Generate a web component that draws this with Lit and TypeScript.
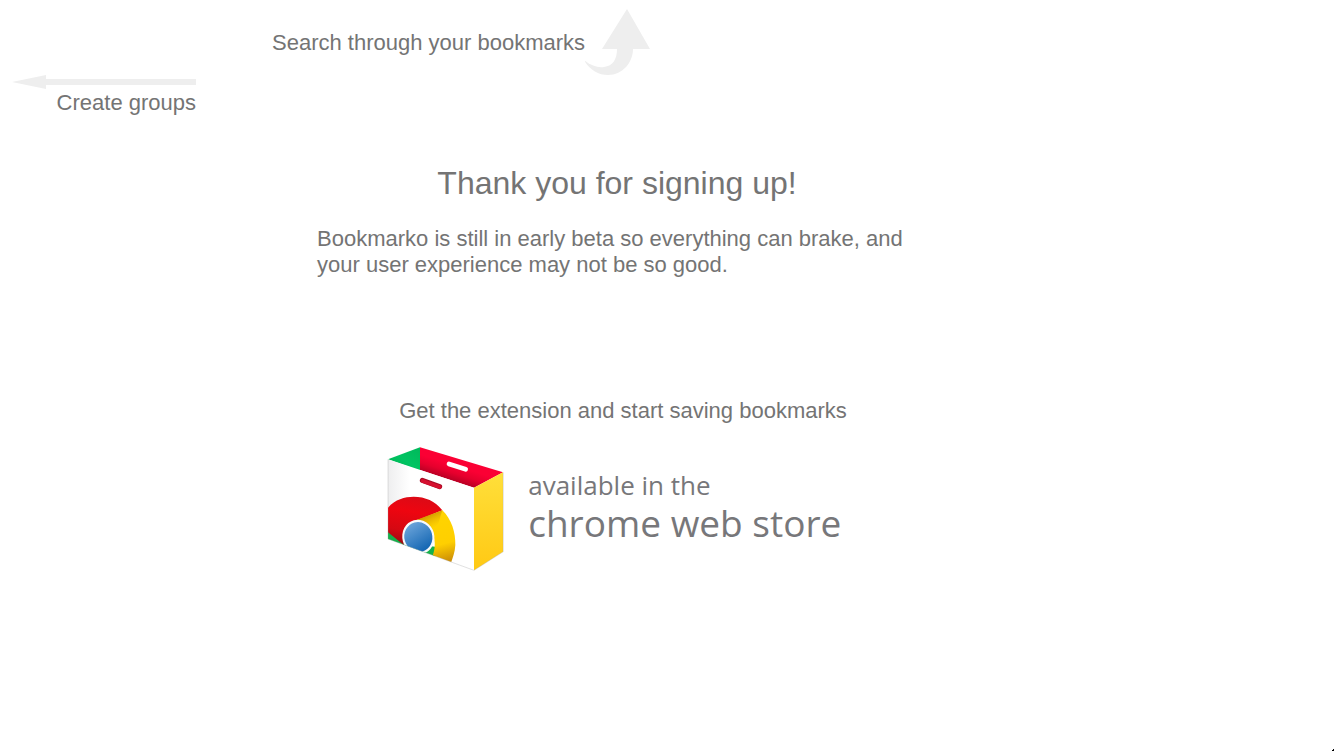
import { LitElement, html, css } from "lit";
import { customElement } from "lit/decorators.js";

@customElement("chrome-bag")
class ChromeBag extends LitElement {
  static styles = css`
    :host { display: block; flex: none; }
    .bag { display: block; width: 117px; height: 126px; }
  `;

  render() {
    return html`
      <svg class="bag" viewBox="24 18 351 378" aria-hidden="true">
        <defs>
          <clipPath id="front"><path d="M27 58 285 143V391L27 297Z" /></clipPath>
          <linearGradient id="green" x1="0" x2="1" y1="1" y2="0">
            <stop offset="0" stop-color="#00b050" /><stop offset=".5" stop-color="#00c462" /><stop offset="1" stop-color="#00b85a" />
          </linearGradient>
          <linearGradient id="inside" gradientUnits="userSpaceOnUse" x1="218" x2="204" y1="73" y2="117">
            <stop offset="0" stop-color="#fb0034" /><stop offset=".5" stop-color="#e6002d" /><stop offset="1" stop-color="#b80024" />
          </linearGradient>
          <linearGradient id="side" x1="0" x2="0" y1="0" y2="1">
            <stop offset="0" stop-color="#ffdf3a" /><stop offset="1" stop-color="#ffc914" />
          </linearGradient>
          <linearGradient id="paper" x1="0" x2="1">
            <stop offset="0" stop-color="#eeeeef" /><stop offset=".25" stop-color="#fff" />
          </linearGradient>
          <linearGradient id="red" x1=".5" x2=".3" y1="0" y2="1">
            <stop offset="0" stop-color="#dc0a16" /><stop offset=".3" stop-color="#ee0510" /><stop offset=".7" stop-color="#d50812" /><stop offset="1" stop-color="#960c10" />
          </linearGradient>
          <linearGradient id="yellow" gradientUnits="userSpaceOnUse" x1="175" x2="215" y1="220" y2="365">
            <stop offset="0" stop-color="#ffd400" /><stop offset=".62" stop-color="#ffcf00" /><stop offset="1" stop-color="#c98a08" />
          </linearGradient>
          <linearGradient id="fold" gradientUnits="userSpaceOnUse" x1="148" x2="165" y1="225" y2="262">
            <stop offset="0" stop-color="#b87c00" stop-opacity=".65" /><stop offset="1" stop-color="#e0a500" stop-opacity="0" />
          </linearGradient>
          <linearGradient id="blue" x1=".3" x2=".6" y1="0" y2="1">
            <stop offset="0" stop-color="#6ba4da" /><stop offset="1" stop-color="#1265b2" />
          </linearGradient>
        </defs>
        <path d="M27 58 123 22V92Z" fill="url(#green)" />
        <path d="M123 22 372 97 285 143 123 90Z" fill="url(#inside)" />
        <path d="M210 72 260 88" stroke="#fff" stroke-width="14" stroke-linecap="round" />
        <path d="M285 143 372 97V335L285 391Z" fill="url(#side)" />
        <path d="M27 58 285 143V391L27 297Z" fill="url(#paper)" />
        <g clip-path="url(#front)">
          <path d="M20 270 80 308 168 320V360L20 310Z" fill="#14b14b" />
          <path d="M20 212C42 180 74 170 104 170C139 170 170 184 190 211L116 242C84 253 68 276 75 316L20 271Z" fill="url(#red)" />
          <path d="M190 211C218 238 230 278 229 315C228 337 221 354 216 368L160 350C166 334 170 315 165 294C160 265 139 243 113 240Z" fill="url(#yellow)" />
          <path d="M190 211 165 294C160 265 139 243 113 240Z" fill="url(#fold)" />
          <ellipse cx="118" cy="291" rx="48" ry="52" fill="#f7f9fb" transform="rotate(-15 118 291)" />
          <ellipse cx="118" cy="291" rx="42" ry="45" fill="url(#blue)" transform="rotate(-15 118 291)" />
        </g>
        <path d="M130 121 182 140" stroke="#a80924" stroke-width="15" stroke-linecap="round" />
        <path d="M131 123 182 141" stroke="#d5102f" stroke-width="11" stroke-linecap="round" />
        <path d="M27 58V297L285 391 373 335V97" fill="none" stroke="#999" stroke-opacity=".45" stroke-width="2" />
      </svg>
    `;
  }
}

@customElement("app-root")
class AppRoot extends LitElement {
  static styles = css`
    :host {
      display: block;
      position: relative;
      min-height: 100vh;
      box-sizing: border-box;
      background: #fff;
      color: #747474;
      font: 22px/26px "Liberation Sans", Arial, sans-serif;
    }
    p, h1 { margin: 0; font-weight: 400; }
    .hints { display: flex; align-items: flex-start; gap: 76px; padding: 8px 12px 0; }
    .groups { width: 184px; padding-top: 67px; text-align: right; }
    .groups p { padding-top: 1px; }
    .search { display: flex; align-items: flex-start; }
    .search p { padding-top: 22px; }
    .line-arrow { display: block; width: 184px; height: 14px; fill: #eee; }
    .curved-arrow { display: block; width: 66px; height: 68px; fill: #eee; }
    .content { width: 600px; max-width: calc(100% - 340px); margin: 48px 0 0 317px; }
    .title { font-size: 32px; line-height: 38px; text-align: center; }
    .notice { margin-top: 24px; }
    .store { width: max-content; margin: 120px auto 0; }
    .store p { padding-left: 12px; }
    .link { display: flex; align-items: flex-start; gap: 24px; margin-top: 22px; color: #77777a; text-decoration: none; font-family: "Open Sans", "Noto Sans", sans-serif; }
    .label { display: grid; padding-top: 22px; }
    .small { font-size: 26px; line-height: 34px; }
    .large { font-size: 37px; line-height: 42px; }
    .corner { position: absolute; right: 0; bottom: 0; width: 2px; height: 2px; fill: #000; }
  `;

  render() {
    return html`
      <header class="hints">
        <div class="groups">
          <svg class="line-arrow" viewBox="0 0 184 14" aria-hidden="true"><path d="M0 7 34 0V4H184V10H34V14Z" /></svg>
          <p>Create groups</p>
        </div>
        <div class="search">
          <p>Search through your bookmarks</p>
          <svg class="curved-arrow" viewBox="0 0 66 68" aria-hidden="true">
            <path d="M42 1 65 41H48C48 54 38 67 23 67C13 67 4 61 -1 52C6 58 13 60 19 59C28 58 32 51 32 41H17Z" />
          </svg>
        </div>
      </header>
      <main class="content">
        <h1 class="title">Thank you for signing up!</h1>
        <p class="notice">Bookmarko is still in early beta so everything can brake, and your user experience may not be so good.</p>
        <section class="store">
          <p>Get the extension and start saving bookmarks</p>
          <a class="link" href="#">
            <chrome-bag></chrome-bag>
            <span class="label"><span class="small">available in the</span><span class="large">chrome web store</span></span>
          </a>
        </section>
      </main>
      <svg class="corner" viewBox="0 0 2 2" aria-hidden="true"><path d="M1 0H2V2H0V1H1Z" /></svg>
    `;
  }
}
